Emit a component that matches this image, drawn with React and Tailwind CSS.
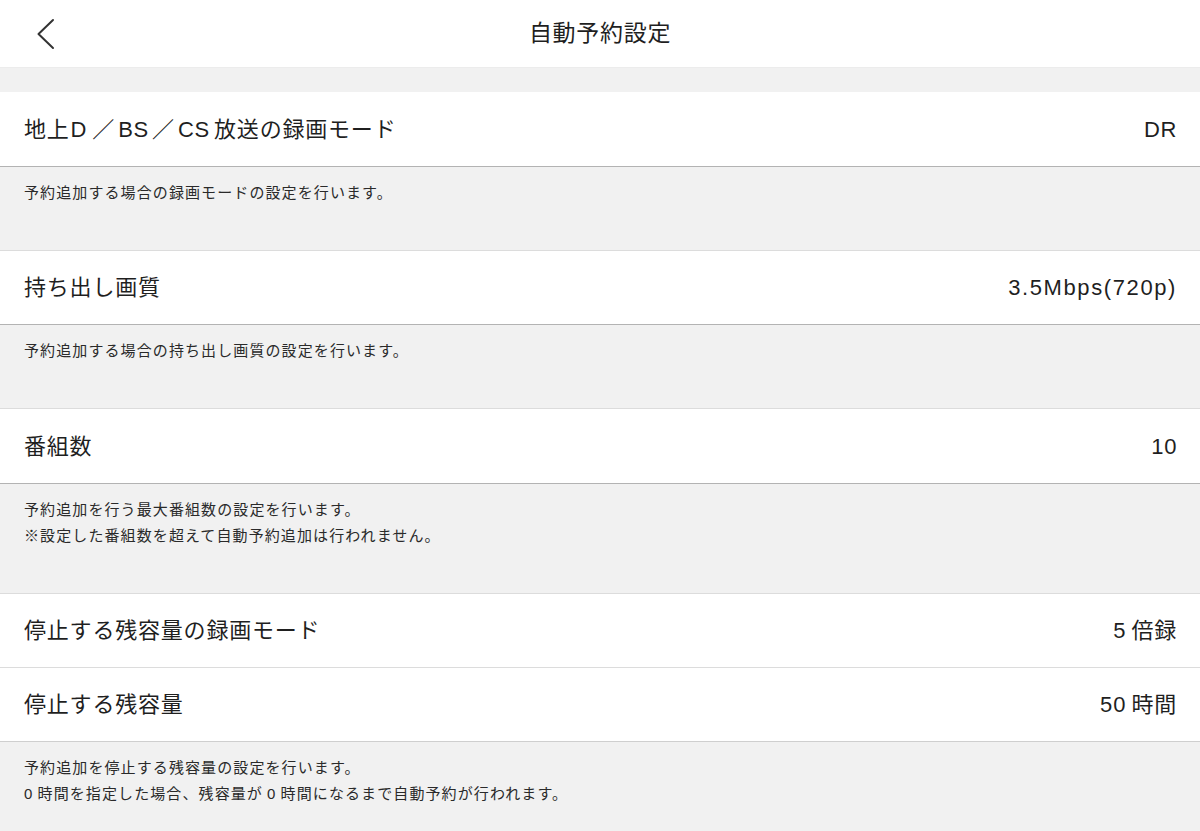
import React from "react";

const font = { fontFamily: '"Liberation Sans", "Noto Sans CJK JP", sans-serif' };

const firstLabel = (
  <>
    地上<span className="ml-[1px] mr-[2px]">D</span>
    <span className="mx-[3px]">／</span>BS<span className="mx-[3px]">／</span>CS
    <span className="ml-[4px]">放送の録画モード</span>
  </>
);

const sections = [
  {
    rows: [{ label: firstLabel, value: "DR", h: "h-[75px]", line: "border-[#b3b3b3]", vt: "tracking-[0.6px]" }],
    desc: ["予約追加する場合の録画モードの設定を行います。"],
  },
  {
    rows: [{ label: "持ち出し画質", value: "3.5Mbps(720p)", h: "h-[74px]", line: "border-[#b3b3b3]", vt: "tracking-[1.6px]" }],
    desc: ["予約追加する場合の持ち出し画質の設定を行います。"],
  },
  {
    rows: [{ label: "番組数", value: "10", h: "h-[75px]", line: "border-[#b3b3b3]", vt: "tracking-[0.6px]" }],
    desc: ["予約追加を行う最大番組数の設定を行います。", "※設定した番組数を超えて自動予約追加は行われません。"],
  },
  {
    rows: [
      { label: "停止する残容量の録画モード", value: "5\u2009倍録", h: "h-[74px]", line: "border-[#dcdcdc]", vt: "tracking-[0.8px]" },
      { label: "停止する残容量", value: "50\u2009時間", h: "h-[74px]", line: "border-[#cfcfcf]", vt: "tracking-[0.8px]" },
    ],
    desc: ["予約追加を停止する残容量の設定を行います。", "0\u2009時間を指定した場合、残容量が\u20090\u2009時間になるまで自動予約が行われます。"],
    last: true,
  },
];

function Row({ label, value, h, line, vt }) {
  return (
    <div className={`${h} flex items-center justify-between bg-white border-b ${line} pl-6 pr-[23px]`}>
      <span className="flex items-center text-[22px] tracking-[0.8px] text-[#1f1f1f]">{label}</span>
      <span className={`text-[22px] ${vt} text-[#1f1f1f]`}>{value}</span>
    </div>
  );
}

function Desc({ lines, last }) {
  return (
    <div className={`bg-[#f1f1f1] px-6 pt-[13px] pb-[44px] ${last ? "" : "border-b border-[#dcdcdc]"}`}>
      {lines.map((t) => (
        <p key={t} className="text-[15px] leading-[26px] tracking-[1.1px] text-[#2a2a2a]">
          {t}
        </p>
      ))}
    </div>
  );
}

export default function App() {
  return (
    <div className="w-[1200px] h-[831px] overflow-hidden bg-[#f1f1f1]" style={font}>
      <div className="h-[68px] bg-white grid grid-cols-[1fr_auto_1fr] items-center border-b border-[#ececec]">
        <div className="pl-[34px] flex items-center">
          <svg width="22" height="34" viewBox="0 0 22 34" fill="none">
            <path d="M19 3 L4.5 17 L19 31" stroke="#333" strokeWidth="2" strokeLinecap="round" strokeLinejoin="round" />
          </svg>
        </div>
        <h1 className="text-[23px] text-[#1f1f1f] tracking-[0.7px]">自動予約設定</h1>
        <div />
      </div>
      <div className="h-[24px]" />
      {sections.map((s, i) => (
        <div key={i}>
          {s.rows.map((r, j) => (
            <Row key={j} {...r} />
          ))}
          <Desc lines={s.desc} last={s.last} />
        </div>
      ))}
    </div>
  );
}
